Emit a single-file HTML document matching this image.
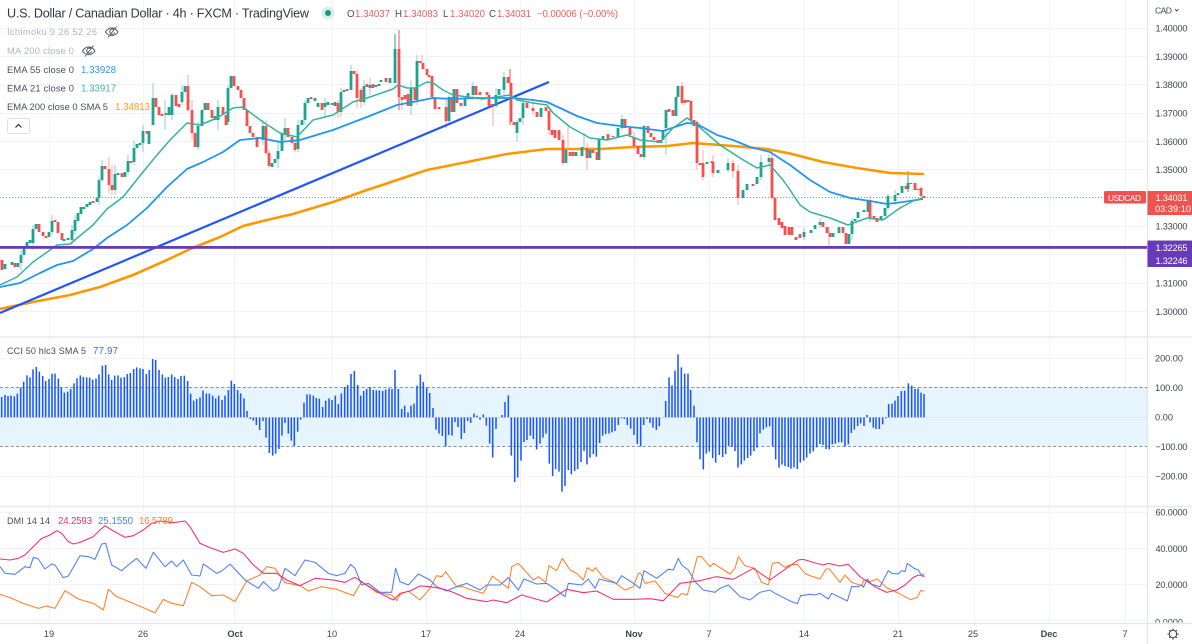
<!DOCTYPE html>
<html lang="en">
<head>
<meta charset="utf-8">
<title>USDCAD chart</title>
<style>
html,body{margin:0;padding:0;background:#fff;width:1192px;height:644px;overflow:hidden}
svg{display:block}
text{font-family:"Liberation Sans",sans-serif;font-size:9.4px;fill:#4a4d57}
.ax text{font-size:9.2px;fill:#41444e}
</style>
</head>
<body>
<svg width="1192" height="644" viewBox="0 0 1192 644" xmlns="http://www.w3.org/2000/svg">
<rect width="1192" height="644" fill="#fff"/>
<!-- grid -->
<path fill="none" stroke="#f2f3f8" stroke-width="1" d="M0 28.5H1147M0 56.5H1147M0 84.5H1147M0 113.5H1147M0 141.5H1147M0 169.5H1147M0 197.5H1147M0 226.5H1147M0 254.5H1147M0 283.5H1147M0 311.5H1147M0 358.5H1147M0 417.5H1147M0 476.5H1147M0 512.5H1147M0 548.5H1147M0 584.5H1147M0 620.5H1147M49.5 0V623M143.5 0V623M234.5 0V623M332.5 0V623M426.5 0V623M520.5 0V623M634.5 0V623M709.5 0V623M804.5 0V623M898.5 0V623M974.5 0V623M1049.5 0V623M1125.5 0V623"/>
<!-- CCI band -->
<rect x="0" y="387" width="1147" height="59.5" fill="#e6f4fe"/>
<path fill="none" stroke="#8d8f96" stroke-width="1" stroke-dasharray="3 2.4" d="M0 387.5H1147M0 446.5H1147"/>
<path fill="none" stroke="#e4e7ee" d="M0 417.5H1147"/>
<!-- separators -->
<path fill="none" stroke="#e8e8f3" stroke-width="1.4" d="M0 337H1192M0 506.5H1192"/>
<path fill="none" stroke="#e3e5ec" stroke-width="1.2" d="M1147.5 0V644M0 623.5H1192"/>

<!-- price wicks -->
<path fill="none" stroke="#8fd0c4" stroke-width="1" d="M21 250V270M33 225V250M52 215V235M72 225V245M75 215V235M99 177V205M102 160V182M115 165V195M128 155V175M134 140V165M143 125V152M153 83V98M165 100V130M172 93V120M182 85V105M198 122V150M218 100V130M228 85V125M263 120V145M278 140V168M285 118V140M298 120V152M305 100V125M325 98V118M341 88V117M351 65V90M364 80V105M370 78V95M411 80V115M417 55V105M449 95V125M473 82V100M496 88V108M504 72V95M517 120V142M523 100V125M584 133V150M666 110V155M644 125V160M622 115V130M728 158V172M761 155V180M769 155V165M804 228V240M820 218V228M888 194V210M895 190V205M852 218V240"/>
<path fill="none" stroke="#22a68f" stroke-width="1" d="M395 34V83M908 171V192"/>
<path fill="none" stroke="#f9a8a6" stroke-width="1" d="M109 157V193M112 165V195M188 75V112M192 100V140M266 120V155M269 150V168M295 140V152M338 100V118M357 70V108M361 88V108M402 97V110M422 55V70M446 100V128M493 105V126M533 103V115M549 108V135M563 135V165M568 127V147M587 143V170M634 132V150M682 82V105M691 100V125M697 120V170M703 150V180M713 155V177M733 160V178M738 165V205M772 150V200M829 227V246M870 196V222M921 186V197"/>
<path fill="none" stroke="#f4504f" stroke-width="1" d="M399 30V110M510 69V125"/>

<!-- EMA 200 -->
<path fill="none" stroke="#ff9800" stroke-width="2.6" stroke-linejoin="round" d="M0 309L33 302L70 295L100 287L133 275L167 260L190 249L220 237L243 226L267 220L293 214L333 202L367 190L400 179L427 170L467 162L507 154L547 149L567 149L600 149L633 147L667 146L693 143L733 146L767 149L790 153.5L823 162L857 168L890 173L924 174"/>
<!-- trend line -->
<path fill="none" stroke="#2255ff" stroke-width="2.2" d="M0 313L549 82"/>
<!-- candle bodies -->
<path fill="none" stroke="#1fa38e" stroke-width="2.8" d="M5 264V269M12 262V265M18 263V267M21 255V263M24 247V255M27 242V247M30 240V243M33 229V243M36 224V229M49 232V237M52 221V232M64 239V241M68 238V240M72 230V240M75 220V231M78 213V221M81 207V214M84 207V209M87 204V207M90 202V205M97 198V202M99 180V198M102 166V180M115 174V190M118 173V175M125 172V177M128 161V172M134 148V162M137 144V148M140 143V145M143 131V143M149 131V144M153 98V125M166 113V115M169 107V115M172 95V115M182 92V102M185 86V92M198 126V147M202 110V126M205 103V110M215 116V120M218 107V120M228 88V122M231 76V88M263 126V140M272 163V167M275 159V163M278 151V159M282 134V151M285 128V134M298 125V149M302 120V125M305 103V120M308 98V103M315 98V101M318 103V107M325 103V107M328 102V105M335 102V106M341 92V112M344 90V92M351 71V90M364 86V102M370 85V88M376 85V87M379 84V86M381 80V82M390 78V83M395 49V83M411 88V106M417 61V100M449 97V121M454 89V112M465 98V106M468 93V98M473 86V95M496 95V106M499 89V95M504 77V90M517 122V133M520 118V122M523 103V118M541 108V117M566 150V163M576 152V156M582 147V156M590 150V158M599 139V160M603 136V139M618 128V137M622 119V128M644 126V157M661 140V143M663 130V140M666 110V128M676 97V116M678 86V97M707 162V164M718 170V173M728 163V170M743 190V198M747 184V190M757 177V184M761 162V177M769 158V162M804 232V237M811 230V233M815 225V229M820 222V225M833 233V237M839 227V233M849 234V244M852 221V234M855 219V221M858 212V218M864 210V212M868 200V212M881 216V220M885 208V216M888 196V208M895 195V201M898 193V195M902 186V193M908 183V189"/>
<path fill="none" stroke="#f4504f" stroke-width="2.8" d="M2 260V270M15 263V267M39 224V232M43 232V236M46 236V238M55 220V222M58 222V233M62 233V240M93 201V203M105 166V169M109 169V185M112 185V190M122 173V177M131 161V163M147 131V134M156 98V107M159 107V115M162 114V116M176 95V106M179 104V107M188 86V110M192 110V133M195 133V147M208 103V110M212 110V118M223 107V115M226 115V125M234 76V86M238 86V90M241 90V98M244 98V110M247 110V126M250 126V133M253 133V137M257 137V147M266 126V153M269 153V166M288 128V137M292 137V143M295 143V150M311 97V99M322 103V110M332 103V105M338 103V112M347 89V91M354 71V74M357 74V98M361 90V102M367 84V87M373 84V88M386 78V82M399 49V97M402 97V100M405 95V99M408 94V106M415 88V100M420 61V63M423 63V69M427 69V75M429 75V77M432 76V97M435 97V109M439 107V109M446 107V121M452 97V112M457 89V103M461 103V106M476 86V95M480 92V95M487 92V95M489 95V106M492 104V106M508 77V83M511 83V122M514 122V125M527 103V108M533 108V111M537 112V117M546 107V111M549 111V130M552 130V135M555 130V138M559 130V140M563 140V163M570 152V156M573 152V156M587 148V158M593 150V153M597 152V160M608 134V140M613 136V137M625 119V128M630 128V135M634 137V146M638 146V154M641 154V157M648 126V133M651 133V137M654 137V140M658 140V143M669 109V112M673 110V116M682 86V103M685 100V103M688 100V102M691 101V120M694 120V126M697 122V163M700 163V165M703 163V177M712 161V163M713 162V173M733 163V171M738 171V198M753 184V186M772 158V198M775 198V220M779 218V225M782 222V228M785 226V235M789 227V235M792 227V235M796 237V240M800 234V238M823 222V227M827 227V233M830 233V237M843 227V233M846 233V244M870 200V218M874 216V219M877 218V222M906 186V189M911 183V184M915 183V190M918 189V190M921 188V196M924 196V198"/>
<!-- EMA 55 -->
<path fill="none" stroke="#2196f3" stroke-width="1.8" stroke-linejoin="round" d="M0 287L20 283L40 273L57 265L73 261L93 249L107 238L127 225L147 208L167 187L187 169L203 162L223 152L240 140L260 138L280 142L300 140L333 130L367 117L397 105L413 102L433 98L453 99L473 98L493 98L513 98L533 100L547 102L560 108L577 116L597 123L620 126L640 128L663 131L687 123L697 124L717 135L733 140L750 147L770 152L790 165L810 180L830 192L850 198L870 201L887 204L903 202L923 199"/>
<!-- EMA 21 -->
<path fill="none" stroke="#36b39a" stroke-width="1.5" stroke-linejoin="round" d="M0 285L17 277L33 262L43 255L57 245L70 244L93 225L107 209L123 197L143 172L157 155L170 140L187 123L200 125L217 118L233 108L243 107L263 122L280 133L297 137L313 120L333 115L353 102L367 98L393 89L398 85L407 88L415 88L427 82L433 83L443 90L453 95L483 99L510 95L517 100L533 103L547 105L553 113L570 127L590 138L607 140L627 135L640 140L660 142L673 128L687 118L697 125L720 145L740 158L757 168L770 165L783 180L790 190L800 205L810 212L830 218L848 225L867 218L883 220L900 208L913 201L923 198"/>
<!-- price dotted line -->
<path fill="none" stroke="#ef5350" stroke-opacity=".75" stroke-width="1" stroke-dasharray="1 2" d="M0 197.5H1104"/>
<!-- horizontal purple -->
<rect x="0" y="246" width="1147" height="2.8" fill="#673ab7"/>

<!-- CCI histogram, coordinates in 3x crop space -->
<g fill="none" stroke="#1a56ff" stroke-width="4.6">
<path transform="translate(0 335) scale(.33333)" d="M5 247V186M15 247V180M24 247V183M33 247V182M43 247V184M52 247V176M62 247V158M71 247V140M81 247V121M90 247V127M99 247V103M109 247V96M118 247V110M128 247V123M137 247V138M147 247V132M156 247V116M165 247V116M175 247V131M184 247V158M193 247V173M203 247V170M212 247V162M222 247V145M231 247V130M241 247V121M250 247V126M260 247V127M269 247V128M278 247V134M288 247V131M297 247V118M307 247V92M317 247V90M326 247V118M335 247V135M344 247V122M354 247V121M363 247V128M373 247V126M382 247V117M391 247V114M401 247V102M410 247V97M420 247V100M429 247V102M439 247V117M448 247V105M458 247V72M467 247V75M477 247V105M487 247V118M496 247V128M505 247V126M515 247V118M524 247V126M534 247V132M543 247V123M553 247V122M563 247V138M572 247V176M581 247V197M590 247V192M600 247V187M609 247V167M619 247V175M628 247V176M638 247V182M647 247V190M656 247V182M666 247V195M675 247V182M685 247V165M694 247V137M703 247V147M713 247V165M722 247V175M732 247V190M741 247V228M751 247V252M760 247V257M769 247V270M779 247V285M789 247V258M798 247V308M808 247V354M818 247V362M827 247V356M837 247V342M846 247V302M855 247V264M865 247V296M874 247V317M883 247V333M893 247V290M902 247V254M912 247V203M921 247V178M930 247V178M940 247V182M949 247V189M958 247V191M968 247V216M977 247V197M987 247V190M996 247V195M1006 247V182M1015 247V207M1024 247V175M1034 247V156M1043 247V150M1053 247V117M1063 247V108M1073 247V150M1082 247V182M1091 247V168M1100 247V162M1110 247V156M1120 247V165M1129 247V166M1138 247V166M1148 247V168M1157 247V164M1167 247V160M1176 247V162M1185 247V105M1195 247V162"/>
<path transform="translate(400 335) scale(.33333)" d="M5 247V222M14 247V212M24 247V232M33 247V212M42 247V206M51 247V152M61 247V118M70 247V141M80 247V158M89 247V174M99 247V219M108 247V284M117 247V296M127 247V303M137 247V334M146 247V300M156 247V302M165 247V261M174 247V276M184 247V312M193 247V294M203 247V258M212 247V264M222 247V236M231 247V242M240 247V254M250 247V238M259 247V272M269 247V326M278 247V368M288 247V282M297 247V248M306 247V240M315 247V201M325 247V181M334 247V362M344 247V441M353 247V428M363 247V377M372 247V321M381 247V315M391 247V302M400 247V312M410 247V343M420 247V326M429 247V308M438 247V296M448 247V386M458 247V423M467 247V402M477 247V410M486 247V470M495 247V453M505 247V405M514 247V418M524 247V408M533 247V402M543 247V381M552 247V348M561 247V388M570 247V368M580 247V357M589 247V365M599 247V324M608 247V302M617 247V297M627 247V296M636 247V292M645 247V288M655 247V270M664 247V250M673 247V252M682 247V270M692 247V281M702 247V300M712 247V327M722 247V334M731 247V270M741 247V252M750 247V264M759 247V278M769 247V285M778 247V274M788 247V248M797 247V198M807 247V127M816 247V151M825 247V107M834 247V58M844 247V97M854 247V116M864 247V116M872 247V165M882 247V212M891 247V322M900 247V373M910 247V403M919 247V356M928 247V350M938 247V369M947 247V383M958 247V360M968 247V366M977 247V357M986 247V333M996 247V336M1005 247V348M1014 247V398M1024 247V388M1033 247V377M1043 247V369M1052 247V362M1062 247V348M1071 247V338M1080 247V295M1090 247V284M1099 247V277M1109 247V274M1118 247V334M1127 247V373M1137 247V398M1146 247V389M1155 247V393M1165 247V396"/>
<path transform="translate(790 335) scale(.33333)" d="M3 247V401M12 247V397M22 247V402M31 247V383M41 247V377M50 247V368M60 247V356M70 247V349M80 247V337M90 247V327M99 247V330M108 247V342M118 247V343M127 247V328M136 247V326M146 247V322M155 247V322M165 247V334M175 247V328M184 247V294M193 247V284M203 247V273M212 247V265M222 247V273M231 247V240M240 247V262M250 247V278M258 247V282M268 247V282M278 247V268M288 247V250M296 247V207M306 247V206M315 247V197M324 247V183M334 247V168M344 247V167M355 247V145M365 247V152M375 247V162M384 247V161M393 247V173M402 247V177"/>
</g>

<!-- DMI lines, coordinates in 3x crop space -->
<g fill="none" stroke-width="3.2" stroke-linejoin="round" stroke-linecap="round">
<g transform="translate(0 505) scale(.33333)">
<path stroke="#ff8228" d="M0 268L30 278L70 295L115 310L140 303L165 310L195 257L235 282L280 295L310 315L325 253L350 275L400 295L465 323L490 283L515 295L550 302L575 232L600 245L635 272L670 270L705 290L740 228L780 210L800 185L825 190L855 233L900 242L925 258L965 245L1010 253L1060 272L1085 230L1130 262L1175 270L1190 287L1200 268"/>
<path stroke="#4f7fff" d="M0 185L15 205L45 208L75 185L90 188L100 157L115 162L135 192L155 177L165 180L190 218L205 213L240 152L265 155L285 163L305 117L317 115L335 180L365 197L385 180L410 160L438 190L460 142L495 185L515 168L530 185L550 165L575 210L600 213L610 177L650 205L665 198L690 177L735 225L775 250L790 230L820 258L835 250L855 190L885 212L915 165L945 172L985 205L1010 212L1035 205L1052 178L1065 190L1085 240L1105 235L1140 262L1175 262L1187 190L1200 230"/>
<path stroke="#f5306f" d="M0 162L30 165L55 160L75 150L100 125L125 100L150 90L170 77L185 85L205 110L220 117L240 112L280 95L300 75L315 62L335 75L375 97L400 92L430 75L455 55L480 48L520 53L555 48L570 65L600 115L630 128L670 142L705 132L730 145L760 180L790 205L830 205L860 225L900 242L945 220L1000 225L1035 232L1065 217L1100 240L1140 265L1180 285L1200 265"/>
</g>
<g transform="translate(400 505) scale(.33333)">
<path stroke="#ff8228" d="M0 268L25 258L60 285L90 250L110 212L125 215L137 200L170 245L190 245L200 250L250 265L277 213L325 250L335 185L355 175L400 225L415 215L437 232L447 182L470 197L487 160L510 195L530 205L550 225L562 188L578 198L587 188L610 218L640 230L675 255L700 245L715 205L722 205L735 235L765 228L795 265L833 278L845 265L862 270L892 155L905 155L930 185L940 175L990 207L1005 190L1015 155L1035 182L1065 190L1085 232L1105 240L1117 175L1135 172L1155 187L1170 180"/>
<path stroke="#4f7fff" d="M0 230L25 240L55 207L90 225L110 245L140 258L170 245L200 235L240 255L260 240L300 240L325 218L355 255L372 222L410 237L440 235L470 255L495 275L505 235L545 240L565 222L585 250L598 222L650 235L665 212L700 235L720 250L732 197L770 220L805 193L820 195L835 160L845 180L865 195L885 230L910 255L945 262L960 250L985 240L1020 275L1050 285L1080 262L1110 255L1120 262L1170 288"/>
<path stroke="#f5306f" d="M0 265L30 258L60 243L90 245L130 252L160 262L200 280L260 290L280 285L320 293L365 270L440 291L500 253L550 263L590 258L640 283L700 283L750 281L790 287L840 235L900 227L950 215L1000 223L1060 190L1110 225L1170 183"/>
</g>
<g transform="translate(790 505) scale(.33333)">
<path stroke="#ff8228" d="M0 180L22 178L45 205L60 212L90 222L108 192L118 192L150 232L165 210L185 232L215 242L222 225L240 230L262 222L290 248L320 262L345 275L362 284L382 277L392 257L402 258"/>
<path stroke="#4f7fff" d="M0 288L22 296L32 272L60 268L75 270L90 265L115 282L125 265L172 288L185 245L205 245L215 240L220 247L232 222L245 238L270 245L295 197L305 205L325 207L335 197L345 200L352 175L372 190L385 195L392 207L402 210"/>
<path stroke="#f5306f" d="M0 183L25 165L40 163L80 175L100 180L115 175L150 183L175 178L210 215L260 248L290 262L320 255L345 240L370 217L385 210L402 214"/>
</g>
</g>

<!-- legend -->
<text x="7" y="17.500" style="font-size:12.6px;fill:#34363f" textLength="302">U.S. Dollar / Canadian Dollar · 4h · FXCM · TradingView</text>
<circle cx="328" cy="13" r="6.5" fill="#d8f0eb"/>
<circle cx="328" cy="13" r="3" fill="#1c9a85"/>
<g>
<text x="347" y="17" textLength="7" style="font-size:9.7px">O</text>
<text x="355" y="17" textLength="35" style="font-size:9.7px;fill:#f0605e">1.34037</text>
<text x="395" y="17" textLength="7" style="font-size:9.7px">H</text>
<text x="403" y="17" textLength="35" style="font-size:9.7px;fill:#f0605e">1.34083</text>
<text x="443" y="17" textLength="6" style="font-size:9.7px">L</text>
<text x="450" y="17" textLength="35" style="font-size:9.7px;fill:#f0605e">1.34020</text>
<text x="489" y="17" textLength="7" style="font-size:9.7px">C</text>
<text x="497" y="17" textLength="34" style="font-size:9.7px;fill:#f0605e">1.34031</text>
<text x="537" y="17" textLength="81" style="font-size:9.7px;fill:#f0605e">−0.00006 (−0.00%)</text>
</g>
<text x="7" y="35" textLength="90" style="fill:#b2b5be">Ichimoku 9 26 52 26</text>
<g fill="none" stroke="#555861" stroke-width="1">
<path d="M105.5 32c3.5-5.5 9-5.5 12.5 0c-3.5 5-9 5-12.5 0zM113.8 29.5a2.6 2.6 0 1 0 1 3M108 37.5L116.5 26.5"/>
<path d="M82.5 51c3.5-5.5 9-5.5 12.5 0c-3.5 5-9 5-12.5 0zM90.8 48.5a2.6 2.6 0 1 0 1 3M85 56.5L93.5 45.5"/>
</g>
<text x="7" y="54" textLength="67" style="fill:#b2b5be">MA 200 close 0</text>
<text x="7" y="73" textLength="67">EMA 55 close 0</text>
<text x="81" y="73" textLength="35" style="font-size:9.7px;fill:#2f9bf3">1.33928</text>
<text x="7" y="91.5" textLength="67">EMA 21 close 0</text>
<text x="81" y="91.5" textLength="35" style="font-size:9.7px;fill:#42b8a2">1.33917</text>
<text x="7" y="110" textLength="101">EMA 200 close 0 SMA 5</text>
<text x="115" y="110" textLength="35" style="font-size:9.7px;fill:#ff9c1a">1.34813</text>
<rect x="7.5" y="118.5" width="22" height="15" rx="2" fill="#fff" stroke="#dfe1e8"/>
<path d="M15.500 127.500l3-3l3 3" fill="none" stroke="#2a2e39" stroke-width="1.2"/>
<text x="7" y="354" textLength="79" style="font-size:9px">CCI 50 hlc3 SMA 5</text>
<text x="93" y="354" textLength="25" style="font-size:9.7px;fill:#3d6cff">77.97</text>
<text x="7" y="524" textLength="43" style="font-size:9px">DMI 14 14</text>
<text x="58" y="524" textLength="34" style="font-size:9.7px;fill:#f5306f">24.2593</text>
<text x="98" y="524" textLength="35" style="font-size:9.7px;fill:#4f7fff">25.1550</text>
<text x="139" y="524" textLength="34" style="font-size:9.7px;fill:#ff8228">16.5789</text>

<!-- price axis -->
<g class="ax">
<text x="1155" y="13.500" textLength="17" style="font-size:8.6px">CAD</text>
<path d="M1175 9.200l1.800 1.800l1.800-1.800" fill="none" stroke="#41444e" stroke-width="1"/>
<text x="1155.500" y="31.500" textLength="32">1.40000</text>
<text x="1155.500" y="59.800" textLength="32">1.39000</text>
<text x="1155.500" y="88" textLength="32">1.38000</text>
<text x="1155.500" y="116.500" textLength="32">1.37000</text>
<text x="1155.500" y="144.800" textLength="32">1.36000</text>
<text x="1155.500" y="173" textLength="32">1.35000</text>
<text x="1155.500" y="229.500" textLength="32">1.33000</text>
<text x="1155.500" y="286.500" textLength="32">1.31000</text>
<text x="1155.500" y="314.800" textLength="32">1.30000</text>
<text x="1155" y="361.500" textLength="28">200.00</text>
<text x="1155" y="391" textLength="28">100.00</text>
<text x="1155" y="420.500" textLength="18">0.00</text>
<text x="1155.500" y="450" textLength="32">−100.00</text>
<text x="1155.500" y="479.500" textLength="32">−200.00</text>
<text x="1155.500" y="515.500" textLength="32">60.0000</text>
<text x="1155.500" y="551.800" textLength="32">40.0000</text>
<text x="1155.500" y="587.800" textLength="32">20.0000</text>
<text x="1155" y="625.500" textLength="28">0.0000</text>
</g>
<rect x="1148" y="622.5" width="44" height="21.5" fill="#fff"/>
<path d="M1147.500 623.500H1192" stroke="#e3e5ec" stroke-width="1.2"/>

<!-- tags -->
<rect x="1104" y="191" width="42" height="12.5" rx="1.5" fill="#ef5350"/>
<text x="1108" y="200.800" textLength="33" style="font-size:8.4px;fill:#fff">USDCAD</text>
<rect x="1147.5" y="191" width="44.5" height="24" fill="#ef5350"/>
<text x="1155.500" y="200.800" textLength="32" style="font-size:9.2px;fill:#fff">1.34031</text>
<text x="1155" y="212" textLength="36" style="font-size:9.2px;fill:#fff">03:39:10</text>
<rect x="1147.5" y="240" width="44.5" height="27" fill="#673ab7"/>
<rect x="1147.5" y="240" width="44.5" height="1" fill="#b7a5da"/>
<text x="1155.500" y="250.800" textLength="32" style="font-size:9.2px;fill:#fff">1.32265</text>
<text x="1155.500" y="264" textLength="32" style="font-size:9.2px;fill:#fff">1.32246</text>

<!-- time axis -->
<g class="ax" text-anchor="middle">
<text x="49" y="637">19</text>
<text x="143" y="637">26</text>
<text x="235" y="637" style="font-weight:bold">Oct</text>
<text x="332" y="637">10</text>
<text x="426" y="637">17</text>
<text x="520" y="637">24</text>
<text x="634" y="637" style="font-weight:bold">Nov</text>
<text x="709" y="637">7</text>
<text x="804" y="637">14</text>
<text x="898" y="637">21</text>
<text x="973" y="637">25</text>
<text x="1049" y="637" style="font-weight:bold">Dec</text>
<text x="1125" y="637">7</text>
</g>
<!-- gear -->
<g fill="none" stroke="#3a3d47" stroke-width="1">
<circle cx="1173" cy="634" r="3.7"/>
<path d="M1173 628.500v2M1173 637.700v2M1167.500 634h2M1176.700 634h2M1169.100 630.100l1.300 1.300M1175.600 636.600l1.300 1.300M1169.100 637.900l1.300-1.300M1175.600 631.400l1.300-1.300"/>
</g>
</svg>
</body>
</html>
